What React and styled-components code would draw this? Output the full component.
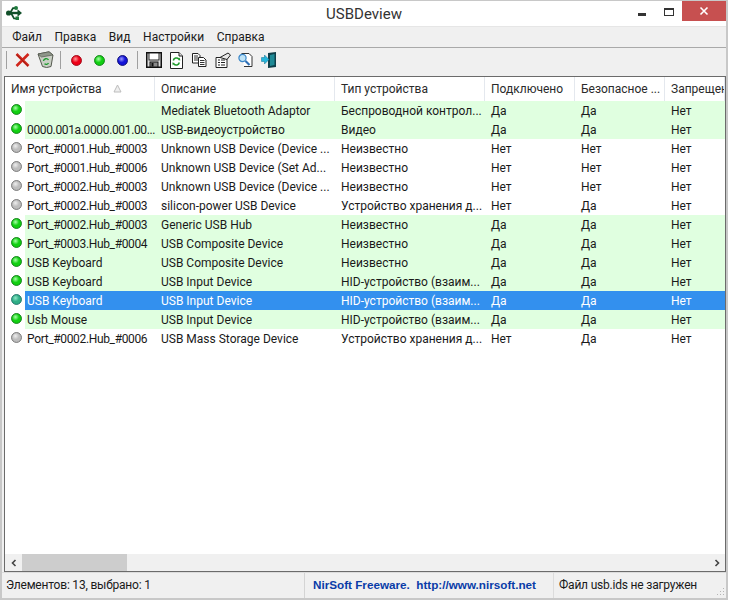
import styled, { createGlobalStyle } from "styled-components";

const GlobalStyle = createGlobalStyle`
    html, body {
        margin: 0;
        padding: 0;
        background: #fff;
    }
`;

const columns = [
    { title: "Имя устройства", width: 150 },
    { title: "Описание", width: 180 },
    { title: "Тип устройства", width: 150 },
    { title: "Подключено", width: 90 },
    { title: "Безопасное ...", width: 90 },
    { title: "Запрещен", width: 60 },
];

const rows = [
    { state: "on", cells: ["", "Mediatek Bluetooth Adaptor", "Беспроводной контрол...", "Да", "Да", "Нет"] },
    { state: "on", cells: ["0000.001a.0000.001.00...", "USB-видеоустройство", "Видео", "Да", "Да", "Нет"] },
    { state: "off", cells: ["Port_#0001.Hub_#0003", "Unknown USB Device (Device ...", "Неизвестно", "Нет", "Нет", "Нет"] },
    { state: "off", cells: ["Port_#0001.Hub_#0006", "Unknown USB Device (Set Ad...", "Неизвестно", "Нет", "Нет", "Нет"] },
    { state: "off", cells: ["Port_#0002.Hub_#0003", "Unknown USB Device (Device ...", "Неизвестно", "Нет", "Нет", "Нет"] },
    { state: "off", cells: ["Port_#0002.Hub_#0003", "silicon-power USB Device", "Устройство хранения д...", "Нет", "Да", "Нет"] },
    { state: "on", cells: ["Port_#0002.Hub_#0003", "Generic USB Hub", "Неизвестно", "Да", "Да", "Нет"] },
    { state: "on", cells: ["Port_#0003.Hub_#0004", "USB Composite Device", "Неизвестно", "Да", "Да", "Нет"] },
    { state: "on", cells: ["USB Keyboard", "USB Composite Device", "Неизвестно", "Да", "Да", "Нет"] },
    { state: "on", cells: ["USB Keyboard", "USB Input Device", "HID-устройство (взаим...", "Да", "Да", "Нет"] },
    { state: "selected", cells: ["USB Keyboard", "USB Input Device", "HID-устройство (взаим...", "Да", "Да", "Нет"] },
    { state: "on", cells: ["Usb Mouse", "USB Input Device", "HID-устройство (взаим...", "Да", "Да", "Нет"] },
    { state: "off", cells: ["Port_#0002.Hub_#0006", "USB Mass Storage Device", "Устройство хранения д...", "Нет", "Да", "Нет"] },
];

const ballColors = {
    red: ["#ff9a9a", "#ee0018", "#9a0010"],
    green: ["#a8ffa8", "#12d012", "#0a7a10"],
    blue: ["#9a9aff", "#1414d8", "#080870"],
    gray: ["#eeeeee", "#bdbdbd", "#707070"],
    teal: ["#8fe8c8", "#2fae86", "#1c6e66"],
};

const Ball = ({ color }) => {
    const [a, b, c] = ballColors[color];
    const id = `ball-${color}`;
    return (
        <svg width="11" height="11" viewBox="0 0 12 12">
            <defs>
                <radialGradient id={id} cx="0.4" cy="0.35" r="0.65">
                    <stop offset="0" stopColor={a} />
                    <stop offset="0.55" stopColor={b} />
                    <stop offset="1" stopColor={b} />
                </radialGradient>
            </defs>
            <circle cx="6" cy="6" r="5.4" fill={`url(#${id})`} stroke={c} strokeWidth="1" />
        </svg>
    );
};

const UsbLogo = () => (
    <svg width="16" height="16" viewBox="0 0 16 16">
        <path d="M2 8H13" stroke="#12502a" strokeWidth="2.4" />
        <path d="M11.5 4.2L16 8L11.5 11.8Z" fill="#12502a" />
        <circle cx="2.6" cy="8" r="2.6" fill="#12502a" />
        <path d="M4 8L7 3.2H9.5M5 8L8 13.5H10.5" stroke="#12502a" strokeWidth="1.7" fill="none" />
        <circle cx="10" cy="3" r="2" fill="#1f7a3d" />
        <rect x="9.5" y="11.5" width="3.5" height="3.5" fill="#1f7a3d" />
    </svg>
);

const DeleteIcon = () => (
    <svg width="15" height="14" viewBox="0 0 15 14">
        <path d="M1.5 1L13.5 13M13.5 1L1.5 13" stroke="#d0261c" strokeWidth="2.6" />
        <path d="M1.5 1.5L13 13" stroke="#8a1810" strokeWidth="0.7" />
    </svg>
);

const BinIcon = () => (
    <svg width="17" height="18" viewBox="0 0 17 18">
        <path d="M1 3L12 0.8L16 4L14 15.5Q9.5 17.5 5.5 15.5Z" fill="#c9cfc4" stroke="#55594f" />
        <path d="M1 3L12 0.8L16 4L4.5 6Z" fill="#8f968a" stroke="#55594f" strokeWidth="0.7" />
        <path d="M6.5 10A2.7 2.7 0 0 1 11.5 9M11.5 12A2.7 2.7 0 0 1 7.5 12.8" stroke="#189a2a" strokeWidth="1.4" fill="none" />
    </svg>
);

const SaveIcon = () => (
    <svg width="16" height="16" viewBox="0 0 16 16">
        <rect x="0.75" y="0.75" width="14.5" height="14.5" fill="#dcdcdc" stroke="#111" strokeWidth="1.5" />
        <rect x="3" y="1" width="10" height="7" fill="#fff" stroke="#111" strokeWidth="0.9" />
        <rect x="4" y="10" width="8" height="5" fill="#8a8a8a" stroke="#111" />
        <rect x="5.5" y="11" width="2" height="3.5" fill="#111" />
    </svg>
);

const RefreshIcon = () => (
    <svg width="13" height="17" viewBox="0 0 13 17">
        <path d="M0.5 0.5H9L12.5 4V16.5H0.5Z" fill="#fff" stroke="#222" />
        <path d="M9 0.5V4H12.5" fill="#ddd" stroke="#222" />
        <path d="M3.3 8.5A3.2 3.2 0 0 1 8.8 7M9.3 10.5A3.2 3.2 0 0 1 3.8 12" stroke="#1f9a2c" strokeWidth="1.5" fill="none" />
        <path d="M7.8 8L10.3 8.5L9.8 5.5ZM4.8 11L2.3 10.5L2.8 13.5Z" fill="#1f9a2c" />
    </svg>
);

const CopyIcon = () => (
    <svg width="15" height="14" viewBox="0 0 15 14">
        <path d="M0.5 0.5H6L8 2.5V10H0.5Z" fill="#fff" stroke="#222" />
        <path d="M2 3H6M2 5H6M2 7H6" stroke="#333" />
        <path d="M6.5 4.5H11.5L14 7V13.5H6.5Z" fill="#fff" stroke="#222" />
        <path d="M8 7.5H12.5M8 9.5H12.5M8 11.5H12.5" stroke="#333" />
    </svg>
);

const PropsIcon = () => (
    <svg width="16" height="16" viewBox="0 0 16 16">
        <path d="M1 5.5H12V15.5H1Z" fill="#fff" stroke="#222" />
        <path d="M3 8H5M6 8H10M3 10.5H5M6 10.5H10M3 13H5M6 13H10" stroke="#222" />
        <path d="M5 5.5L13 1L15.5 3L12 7.5Z" fill="#e8e8e8" stroke="#222" />
    </svg>
);

const FindIcon = () => (
    <svg width="15" height="14" viewBox="0 0 15 14">
        <path d="M3.5 0.5H11L14 3.5V13.5H6" fill="#fff" stroke="#333" />
        <circle cx="4.5" cy="5" r="3.6" fill="#bfe3f7" stroke="#3a86c8" strokeWidth="1.2" />
        <path d="M7.5 8L11.5 12" stroke="#2f6fb5" strokeWidth="2.2" />
    </svg>
);

const ExitIcon = () => (
    <svg width="16" height="16" viewBox="0 0 16 16">
        <path d="M7 1L15 0V15L7 16Z" fill="#0f3f4a" />
        <path d="M9 3L13.5 2V13L9 14Z" fill="#1f8a96" />
        <path d="M0.5 5.5H3.5V3L8 7.5L3.5 12V9.5H0.5Z" fill="#25b6dc" stroke="#0f6f90" strokeWidth="0.5" />
    </svg>
);

const App = () => {
    return (
        <Window>
            <GlobalStyle />
            <TitleBar>
                <AppIcon>
                    <UsbLogo />
                </AppIcon>
                <Title>USBDeview</Title>
                <Controls>
                    <MinButton />
                    <MaxButton />
                    <CloseButton>
                        <svg width="10" height="10" viewBox="0 0 10 10">
                            <path d="M1.5 1.5L8.5 8.5M8.5 1.5L1.5 8.5" stroke="#fff" strokeWidth="1.6" />
                        </svg>
                    </CloseButton>
                </Controls>
            </TitleBar>
            <Inner>
                <MenuBar>
                    <MenuItem>Файл</MenuItem>
                    <MenuItem>Правка</MenuItem>
                    <MenuItem>Вид</MenuItem>
                    <MenuItem>Настройки</MenuItem>
                    <MenuItem>Справка</MenuItem>
                </MenuBar>
                <Toolbar>
                    <Separator />
                    <ToolButton><DeleteIcon /></ToolButton>
                    <ToolButton><BinIcon /></ToolButton>
                    <Separator />
                    <ToolButton><Ball color="red" /></ToolButton>
                    <ToolButton><Ball color="green" /></ToolButton>
                    <ToolButton><Ball color="blue" /></ToolButton>
                    <Separator />
                    <ToolButton><SaveIcon /></ToolButton>
                    <ToolButton><RefreshIcon /></ToolButton>
                    <ToolButton><CopyIcon /></ToolButton>
                    <ToolButton><PropsIcon /></ToolButton>
                    <ToolButton><FindIcon /></ToolButton>
                    <ToolButton><ExitIcon /></ToolButton>
                </Toolbar>
                <ListView>
                    <ListBody>
                        <Header>
                            {columns.map((col, i) => (
                                <HeaderCell key={col.title} $width={col.width}>
                                    {col.title}
                                    {i === 0 && (
                                        <SortMark>
                                            <svg width="9" height="9" viewBox="0 0 9 9">
                                                <path d="M4.5 1L8 8H1Z" fill="#efefef" stroke="#bdbdbd" />
                                            </svg>
                                        </SortMark>
                                    )}
                                </HeaderCell>
                            ))}
                        </Header>
                        {rows.map((row, r) => (
                            <Row key={r}>
                                {row.cells.map((cell, i) =>
                                    i === 0 ? (
                                        <NameCell key={i} $width={columns[0].width}>
                                            <RowIcon>
                                                <Ball color={row.state === "on" ? "green" : row.state === "off" ? "gray" : "teal"} />
                                            </RowIcon>
                                            <NameLabel $state={row.state} $tight={/\d/.test(cell)}>{cell}</NameLabel>
                                        </NameCell>
                                    ) : (
                                        <Cell key={i} $width={columns[i].width} $state={row.state}>
                                            {cell}
                                        </Cell>
                                    )
                                )}
                            </Row>
                        ))}
                    </ListBody>
                    <ScrollBar>
                        <ScrollArrow>
                            <svg width="8" height="8" viewBox="0 0 8 8">
                                <path d="M5.5 1L2.5 4L5.5 7" stroke="#444" strokeWidth="1.6" fill="none" />
                            </svg>
                        </ScrollArrow>
                        <ScrollThumb />
                        <ScrollTrack />
                        <ScrollArrow>
                            <svg width="8" height="8" viewBox="0 0 8 8">
                                <path d="M2.5 1L5.5 4L2.5 7" stroke="#444" strokeWidth="1.6" fill="none" />
                            </svg>
                        </ScrollArrow>
                    </ScrollBar>
                </ListView>
                <StatusBar>
                    <StatusPanel $width={298}>Элементов: 13, выбрано: 1</StatusPanel>
                    <LinkPanel>NirSoft Freeware.&nbsp; http://www.nirsoft.net</LinkPanel>
                    <StatusPanel $width={172} $divider>Файл usb.ids не загружен</StatusPanel>
                    <Grip>
                        <svg width="10" height="10" viewBox="0 0 10 10">
                            <path d="M8 1h1v1H8zM5 4h1v1H5zM8 4h1v1H8zM2 7h1v1H2zM5 7h1v1H5zM8 7h1v1H8z" fill="#b5b5b5" />
                        </svg>
                    </Grip>
                </StatusBar>
            </Inner>
        </Window>
    );
};

export default App;

const Window = styled.div`
    width: 728px;
    height: 600px;
    box-sizing: border-box;
    display: flex;
    flex-direction: column;
    border-top: 1px solid #c8c8c8;
    border-bottom: 2px solid #c8c8c8;
    border-left: 2px solid #c8c8c8;
    border-right: 2px solid #c8c8c8;
    background: #fff;
    font-family: Roboto, "Noto Sans", sans-serif;
    font-size: 12px;
    color: #1a1a1a;
    overflow: hidden;
`;

const TitleBar = styled.div`
    position: relative;
    height: 25px;
    flex: none;
    display: flex;
    align-items: center;
    justify-content: center;
`;

const AppIcon = styled.div`
    position: absolute;
    left: 4px;
    top: 4px;
    line-height: 0;
`;

const Title = styled.div`
    font-size: 15px;
    color: #333;
`;

const Controls = styled.div`
    position: absolute;
    top: 0;
    right: 0;
    display: flex;
    align-items: flex-start;
`;

const MinButton = styled.div`
    width: 8px;
    height: 3px;
    margin: 12px 18px 0 0;
    background: #333;
`;

const MaxButton = styled.div`
    width: 10px;
    height: 8px;
    box-sizing: border-box;
    margin: 7px 8px 0 0;
    border: 1px solid #333;
    border-top-width: 2px;
`;

const CloseButton = styled.div`
    width: 44px;
    height: 20px;
    background: #c75050;
    display: flex;
    align-items: center;
    justify-content: center;
`;

const Inner = styled.div`
    flex: 1;
    display: flex;
    flex-direction: column;
    min-height: 0;
    background: #f0f0f0;
`;

const MenuBar = styled.div`
    height: 20px;
    flex: none;
    display: flex;
    align-items: center;
    padding-left: 4px;
    border-bottom: 1px solid #a9a9a9;
    border-top: 1px solid #e6e6e6;
    font-size: 12px;
`;

const MenuItem = styled.span`
    padding: 0 6.3px;
`;

const Toolbar = styled.div`
    height: 28px;
    box-sizing: border-box;
    padding: 0 0 4px 1px;
    flex: none;
    display: flex;
    align-items: center;
`;

const Separator = styled.div`
    width: 1px;
    height: 18px;
    margin: 0 4px 0 3px;
    background: #a0a0a0;
`;

const ToolButton = styled.div`
    width: 23px;
    height: 23px;
    display: flex;
    align-items: center;
    justify-content: center;
`;

const ListView = styled.div`
    flex: 1;
    min-height: 0;
    display: flex;
    flex-direction: column;
    margin: 0 0 0 2px;
    border: 1px solid #6b6b6b;
    background: #fff;
`;

const ListBody = styled.div`
    flex: 1;
    min-height: 0;
    overflow: hidden;
`;

const Header = styled.div`
    display: flex;
    height: 24px;
`;

const HeaderCell = styled.div`
    position: relative;
    flex: none;
    width: ${(p) => p.$width}px;
    box-sizing: border-box;
    padding-left: 6px;
    line-height: 24px;
    white-space: nowrap;
    overflow: hidden;
    color: #2a2a2a;
    border-right: 1px solid #e4e8ee;
`;

const SortMark = styled.span`
    position: absolute;
    left: 108px;
    top: 7px;
    display: flex;
`;

const Row = styled.div`
    display: flex;
    height: 19px;
    line-height: 21px;
    white-space: nowrap;
`;

const NameCell = styled.div`
    flex: none;
    width: ${(p) => p.$width}px;
    display: flex;
`;

const RowIcon = styled.div`
    width: 20px;
    flex: none;
    box-sizing: border-box;
    padding: 3px 0 0 6px;
    background: #fff;
    line-height: 0;
`;

const rowBg = (s) => (s === "on" ? "#e0ffe0" : s === "selected" ? "#3390ee" : "#fff");
const rowFg = (s) => (s === "selected" ? "#fff" : "#1a1a1a");

const NameLabel = styled.div`
    flex: 1;
    padding-left: 2px;
    overflow: hidden;
    letter-spacing: ${(p) => (p.$tight ? "-0.35px" : "0")};
    background: ${(p) => rowBg(p.$state)};
    color: ${(p) => rowFg(p.$state)};
`;

const Cell = styled.div`
    flex: none;
    width: ${(p) => p.$width}px;
    box-sizing: border-box;
    padding-left: 6px;
    overflow: hidden;
    background: ${(p) => rowBg(p.$state)};
    color: ${(p) => rowFg(p.$state)};
`;

const ScrollBar = styled.div`
    height: 17px;
    flex: none;
    display: flex;
    background: #f0f0f0;
`;

const ScrollArrow = styled.div`
    width: 17px;
    flex: none;
    display: flex;
    align-items: center;
    justify-content: center;
`;

const ScrollThumb = styled.div`
    width: 105px;
    flex: none;
    background: #cdcdcd;
`;

const ScrollTrack = styled.div`
    flex: 1;
`;

const StatusBar = styled.div`
    position: relative;
    height: 25px;
    flex: none;
    display: flex;
    align-items: center;
    padding-left: 4px;
    border-top: 1px solid #dcdcdc;
`;

const StatusPanel = styled.div`
    flex: none;
    width: ${(p) => p.$width}px;
    height: 100%;
    box-sizing: border-box;
    line-height: 24px;
    white-space: nowrap;
    letter-spacing: -0.2px;
    padding-left: ${(p) => (p.$divider ? 5 : 0)}px;
    border-left: ${(p) => (p.$divider ? "1px solid #dcdcdc" : "none")};
`;

const LinkPanel = styled.div`
    flex: none;
    width: 249px;
    height: 100%;
    box-sizing: border-box;
    line-height: 24px;
    padding-left: 8px;
    white-space: nowrap;
    border-left: 1px solid #d4d4d4;
    font-family: "Liberation Sans", sans-serif;
    font-size: 11.7px;
    font-weight: bold;
    color: #0a3ca8;
`;

const Grip = styled.div`
    position: absolute;
    right: 1px;
    bottom: 1px;
    line-height: 0;
`;
